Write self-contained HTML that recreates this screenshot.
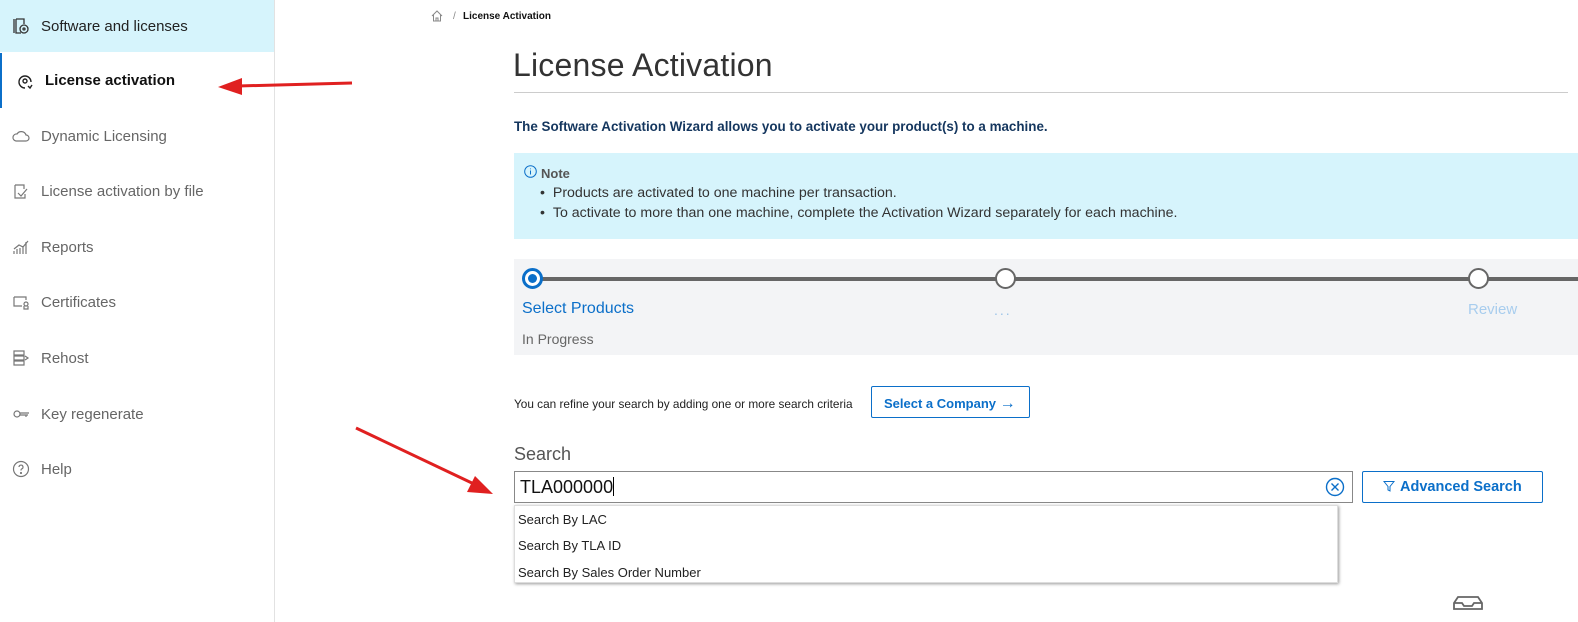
<!DOCTYPE html>
<html><head><meta charset="utf-8"><style>
*{margin:0;padding:0;box-sizing:border-box}
body{width:1578px;height:622px;overflow:hidden;background:#fff;font-family:"Liberation Sans",sans-serif;position:relative;color:#333}
.a{position:absolute;white-space:nowrap}
.side{position:absolute;left:0;top:0;width:275px;height:622px;border-right:1px solid #e2e2e2}
.it{position:absolute;left:0;width:274px;height:52px;font-size:15px;color:#666;display:flex;align-items:center;padding-left:41px}
.it svg{position:absolute;left:12px;top:17px}
</style></head><body>
<div class="side">
<div class="it" style="top:0;background:#d6f4fc;color:#222"><svg width="18" height="18" viewBox="0 0 18 18" fill="none" stroke="#333" stroke-width="1.3"><path d="M2 2v14M4 2h8v5M4 2v14h5"/><circle cx="12" cy="12" r="4"/><circle cx="12" cy="12" r="1"/></svg>Software and licenses</div>
<div class="it" style="top:53px;height:55px;border-left:2px solid #0b6fc9;color:#111;font-weight:bold;padding-left:43px"><svg width="18" height="18" viewBox="0 0 18 18" fill="none" stroke="#222" stroke-width="1.4" style="left:14px;top:19px"><path d="M9 16A6 6 0 1 1 15 10"/><circle cx="9" cy="9" r="2"/><path d="M12 14l2 2 2-3"/></svg>License activation</div>
<div class="it" style="top:110px"><svg width="18" height="18" viewBox="0 0 18 18" fill="none" stroke="#777" stroke-width="1.2"><path d="M4 14h10a3 3 0 0 0 0-6 5 5 0 0 0-9-1 3.5 3.5 0 0 0-1 7z"/></svg>Dynamic Licensing</div>
<div class="it" style="top:165px"><svg width="18" height="18" viewBox="0 0 18 18" fill="none" stroke="#777" stroke-width="1.2"><path d="M3 3h9v4M3 3v13h10v-4M6 11l3 3 6-7"/></svg>License activation by file</div>
<div class="it" style="top:221px"><svg width="18" height="18" viewBox="0 0 18 18" fill="none" stroke="#777" stroke-width="1.2"><path d="M2 16v-3M5 16v-5M8 16v-6M11 16v-8M14 16V4M2 11l5-4 4 2 5-6"/></svg>Reports</div>
<div class="it" style="top:276px"><svg width="18" height="18" viewBox="0 0 18 18" fill="none" stroke="#777" stroke-width="1.2"><path d="M2 4h12v3M2 4v9h8"/><circle cx="14" cy="11" r="2"/><path d="M12 13v3h4v-3"/></svg>Certificates</div>
<div class="it" style="top:332px"><svg width="18" height="18" viewBox="0 0 18 18" fill="none" stroke="#777" stroke-width="1.2"><path d="M2 2h10v4H2zM2 7h10v4H2zM2 12h10v4H2zM13 7l3 2-3 2"/></svg>Rehost</div>
<div class="it" style="top:388px"><svg width="18" height="18" viewBox="0 0 18 18" fill="none" stroke="#777" stroke-width="1.2"><circle cx="5" cy="9" r="3"/><path d="M8 8h9M8 10h8M14 10v2"/></svg>Key regenerate</div>
<div class="it" style="top:443px"><svg width="18" height="18" viewBox="0 0 18 18" fill="none" stroke="#777" stroke-width="1.2"><circle cx="9" cy="9" r="7.5"/><path d="M7 7a2 2 0 1 1 2.5 2c-.5.3-.5.7-.5 1.5"/><circle cx="9" cy="13" r=".5"/></svg>Help</div>
</div>

<svg class="a" style="left:431px;top:10px" width="12" height="12" viewBox="0 0 12 12" fill="none" stroke="#888" stroke-width="1"><path d="M1 6L6 1l5 5M2.5 5v6h7V5M5 11V8h2v3"/></svg>
<div class="a" style="left:453px;top:11px;font-size:10px;color:#888">/</div>
<div class="a" style="left:463px;top:11px;font-size:10px;font-weight:bold;color:#111">License Activation</div>

<div class="a" style="left:513px;top:47px;font-size:32px;color:#333;letter-spacing:.2px">License Activation</div>
<div class="a" style="left:514px;top:92px;width:1054px;height:1px;background:#ccc"></div>
<div class="a" style="left:514px;top:119px;font-size:13.4px;font-weight:bold;color:#14365e">The Software Activation Wizard allows you to activate your product(s) to a machine.</div>

<div class="a" style="left:514px;top:153px;width:1064px;height:86px;background:#d6f4fc"></div>
<svg class="a" style="left:524px;top:165px" width="13" height="13" viewBox="0 0 13 13" fill="none" stroke="#0b6fc9"><circle cx="6.5" cy="6.5" r="5.8"/><path d="M6.5 5.5v4M6.5 3.5v.8"/></svg>
<div class="a" style="left:541px;top:166px;font-size:13px;font-weight:bold;color:#555">Note</div>
<div class="a" style="left:540px;top:185px;font-size:14.2px;color:#333">•&nbsp;&nbsp;Products are activated to one machine per transaction.</div>
<div class="a" style="left:540px;top:205px;font-size:14.2px;color:#333">•&nbsp;&nbsp;To activate to more than one machine, complete the Activation Wizard separately for each machine.</div>

<div class="a" style="left:514px;top:259px;width:1064px;height:96px;background:#f3f4f6"></div>
<div class="a" style="left:532px;top:277px;width:1046px;height:4px;background:#666"></div>
<div class="a" style="left:522px;top:268px;width:21px;height:21px;border-radius:50%;border:3px solid #0b6fc9;background:#fff"><div style="position:absolute;left:3px;top:3px;width:9px;height:9px;border-radius:50%;background:#0b6fc9"></div></div>
<div class="a" style="left:995px;top:268px;width:21px;height:21px;border-radius:50%;border:2px solid #666;background:#fff"></div>
<div class="a" style="left:1468px;top:268px;width:21px;height:21px;border-radius:50%;border:2px solid #666;background:#fff"></div>
<div class="a" style="left:522px;top:300px;font-size:16px;color:#0b6fc9">Select Products</div>
<div class="a" style="left:994px;top:302px;font-size:14px;color:#9cc4e8;letter-spacing:2px">...</div>
<div class="a" style="left:1468px;top:301px;font-size:15px;color:#a8cdee">Review</div>
<div class="a" style="left:522px;top:331px;font-size:14px;color:#666">In Progress</div>

<div class="a" style="left:514px;top:397px;font-size:11.8px;color:#222">You can refine your search by adding one or more search criteria</div>
<div class="a" style="left:871px;top:386px;width:159px;height:32px;border:1px solid #0b6fc9;border-radius:2px;color:#0b6fc9;font-size:13px;font-weight:bold;padding:8px 0 0 12px">Select a Company <span style="font-weight:normal;font-size:16px;position:relative;top:0px">→</span></div>

<div class="a" style="left:514px;top:444px;font-size:18px;color:#555">Search</div>
<div class="a" style="left:514px;top:471px;width:839px;height:32px;border:1px solid #888;font-size:18px;color:#111;padding:5px 0 0 5px">TLA000000<span style="display:inline-block;width:1px;height:19px;background:#000;vertical-align:-3px"></span></div>
<svg class="a" style="left:1325px;top:477px" width="20" height="20" viewBox="0 0 20 20" fill="none" stroke="#0b6fc9" stroke-width="1.4"><circle cx="10" cy="10" r="8.5"/><path d="M6.5 6.5l7 7M13.5 6.5l-7 7"/></svg>
<div class="a" style="left:1362px;top:471px;width:181px;height:32px;border:1px solid #0b6fc9;border-radius:2px;color:#0b6fc9;font-size:14.5px;font-weight:bold;padding:7px 0 0 20px"><svg width="12" height="12" viewBox="0 0 12 12" fill="none" stroke="#0b6fc9" style="vertical-align:-1px;margin-right:5px"><path d="M1 1.5h10L7 6.5V11L5 10V6.5z"/></svg>Advanced Search</div>

<div class="a" style="left:514px;top:505px;width:824px;height:78px;background:#fff;box-shadow:1px 1px 3px rgba(0,0,0,.4);border:1px solid #ddd;font-size:13px;color:#222">
<div style="position:absolute;left:3px;top:6px">Search By LAC</div>
<div style="position:absolute;left:3px;top:32px">Search By TLA ID</div>
<div style="position:absolute;left:3px;top:59px">Search By Sales Order Number</div>
</div>

<svg class="a" style="left:1452px;top:595px" width="32" height="16" viewBox="0 0 32 16" fill="none" stroke="#666" stroke-width="1.8"><path d="M2 8L6 2h20l4 6v6H2zM2 8h8l2 3h8l2-3h8"/></svg>

<svg class="a" style="left:0;top:0" width="1578" height="622" viewBox="0 0 1578 622">
<path d="M352 83L238 86" stroke="#e02020" stroke-width="3"/><path d="M218 87l24-9v17z" fill="#e02020"/>
<path d="M356 428L474 484" stroke="#e02020" stroke-width="3"/><path d="M493 494l-26-2 8-16z" fill="#e02020"/>
</svg>
</body></html>
